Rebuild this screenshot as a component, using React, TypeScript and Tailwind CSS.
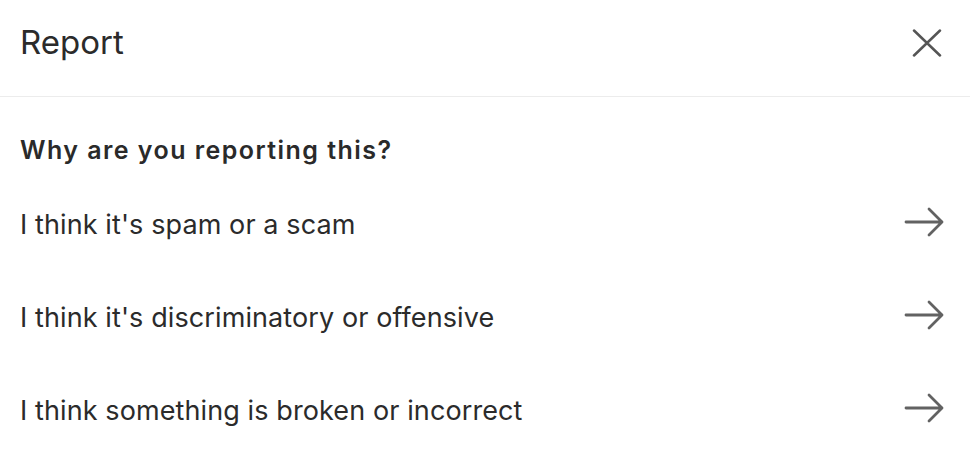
const REASONS = [
  "I think it's spam or a scam",
  "I think it's discriminatory or offensive",
  'I think something is broken or incorrect',
];

function CloseIcon() {
  return (
    <svg width="30" height="28" viewBox="0 0 30 28" fill="none" stroke="#555" strokeWidth="2.5" strokeLinecap="round">
      <path d="M2 1.5 L28 26.5 M28 1.5 L2 26.5" />
    </svg>
  );
}

function ArrowIcon() {
  return (
    <svg width="40" height="30" viewBox="0 0 40 30" fill="none" stroke="#626262" strokeWidth="2.8" strokeLinecap="round" strokeLinejoin="round">
      <path d="M2 15 H38 M25 2 L38 15 L25 28" />
    </svg>
  );
}

export default function App() {
  return (
    <div
      className="w-[970px] h-[470px] bg-white overflow-hidden text-[#2b2b2b]"
      style={{ fontFamily: 'Inter, "Liberation Sans", sans-serif' }}
    >
      {/* Header */}
      <div className="flex h-[97px] items-center justify-between border-b border-[#ececec] pb-[11px] pl-5 pr-[28px]">
        <span className="text-[33px] font-normal leading-none">Report</span>
        <button className="flex items-center justify-center">
          <CloseIcon />
        </button>
      </div>

      {/* Content */}
      <div className="pl-5 pr-[26px]">
        <div className="pt-[39px] pb-[14px] text-[25px] font-semibold leading-[28px] tracking-[1.45px] text-[#2a2a2a]">
          Why are you reporting this?
        </div>
        {REASONS.map((r) => (
          <div key={r} className="flex h-[93px] items-center justify-between">
            <span className="text-[27px] leading-none tracking-[0.1px]">{r}</span>
            <div className="mb-[6px]">
              <ArrowIcon />
            </div>
          </div>
        ))}
      </div>
    </div>
  );
}
